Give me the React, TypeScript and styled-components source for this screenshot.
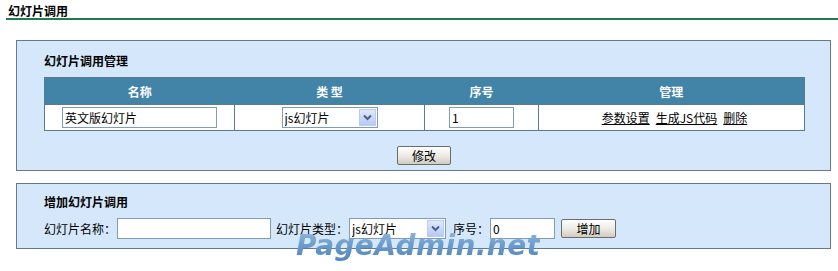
import React from 'react';
import styled, { createGlobalStyle } from 'styled-components';

const GlobalStyle = createGlobalStyle`
  html, body {
    margin: 0;
    padding: 0;
    background: #ffffff;
  }
  body {
    font-family: "Noto Sans CJK SC", "Liberation Sans", sans-serif;
    font-size: 12px;
    color: #000000;
  }
`;

const Page = styled.div`
  position: relative;
  width: 838px;
  height: 271px;
  overflow: hidden;
`;

const TitleBar = styled.div`
  margin-left: 6px;
  padding: 3px 0 0 2px;
  height: 15px;
  line-height: 15px;
  font-weight: bold;
  font-size: 12px;
  border-bottom: 2px solid #237a52;
`;

const Panel = styled.div<{ $top: number }>`
  margin: ${p => p.$top}px 7px 0 16px;
  border: 1px solid #687a87;
  background: #d5e8fb;
  padding: ${p => (p.$top > 15 ? '10px 26px 5px 27px' : '8px 26px 8px 27px')};
`;

const PanelHeading = styled.div<{ $gap: number }>`
  height: 20px;
  line-height: 20px;
  font-weight: bold;
  margin-bottom: ${p => p.$gap}px;
`;

const Grid = styled.table`
  width: 760px;
  border-collapse: collapse;
  border: 1px solid #5b7b91;
  table-layout: fixed;
`;

const HeadCell = styled.th`
  height: 26px;
  padding: 0;
  background: #4283a8;
  color: #ffffff;
  font-weight: bold;
  text-align: center;
  border: 0;
`;

const Cell = styled.td`
  height: 25px;
  padding: 0;
  background: #ffffff;
  text-align: center;
  border-left: 1px solid #5b7b91;
  border-top: 1px solid #5b7b91;
  &:first-child {
    border-left: 0;
  }
`;

const TextBox = styled.input<{ $w: number }>`
  box-sizing: border-box;
  width: ${p => p.$w}px;
  height: 21px;
  margin: 0;
  padding: 0 2px;
  border: 1px solid #7f9db9;
  background: #ffffff;
  font-family: "Noto Sans CJK SC", "Liberation Sans", sans-serif;
  font-size: 12px;
  color: #000000;
  vertical-align: middle;
  outline: none;
`;

const SelectBox = styled.span<{ $w: number }>`
  box-sizing: border-box;
  display: inline-flex;
  align-items: stretch;
  width: ${p => p.$w}px;
  height: 21px;
  border: 1px solid #7f9db9;
  background: #ffffff;
  vertical-align: middle;
`;

const NativeSelect = styled.select`
  flex: 1;
  min-width: 0;
  appearance: none;
  -webkit-appearance: none;
  border: 0;
  margin: 0;
  padding: 0 0 0 2px;
  background: transparent;
  font-family: "Noto Sans CJK SC", "Liberation Sans", sans-serif;
  font-size: 12px;
  color: #000000;
  outline: none;
`;

const DropButton = styled.span`
  box-sizing: border-box;
  width: 17px;
  margin: 1px;
  border: 1px solid #bccbf0;
  background: linear-gradient(#dfe8fd, #b7c9f6);
  display: flex;
  align-items: center;
  justify-content: center;
`;

const Links = styled.span`
  display: inline-flex;
  gap: 6px;
  margin-left: 6px;
  a {
    color: #000000;
    text-decoration: underline;
  }
`;

const Actions = styled.div`
  display: flex;
  justify-content: center;
  margin-top: 15px;
  width: 760px;
`;

const PushButton = styled.button<{ $w: number }>`
  box-sizing: border-box;
  width: ${p => p.$w}px;
  height: 19px;
  margin: 0;
  padding: 0;
  border: 1px solid #6c6c6c;
  border-radius: 2px;
  background: linear-gradient(#ffffff, #ece9e2 55%, #d2ccbf);
  font-family: "Noto Sans CJK SC", "Liberation Sans", sans-serif;
  font-size: 12px;
  line-height: 17px;
  color: #000000;
`;

const FormRow = styled.div`
  display: flex;
  align-items: center;
  height: 23px;
  margin-top: 5px;
`;

const Label = styled.label<{ $ml: number }>`
  margin-left: ${p => p.$ml}px;
  margin-right: 1px;
  white-space: nowrap;
`;

const Spacer = styled.span<{ $w: number }>`
  display: inline-block;
  width: ${p => p.$w}px;
`;

const Watermark = styled.div`
  position: absolute;
  left: 296px;
  top: 229px;
  font-family: "DejaVu Sans", sans-serif;
  font-weight: bold;
  font-style: italic;
  font-size: 28px;
  letter-spacing: 0.4px;
  line-height: 34px;
  background: linear-gradient(#95badf, #6597c9 55%, #4f85bd);
  -webkit-background-clip: text;
  background-clip: text;
  color: transparent;
  pointer-events: none;
`;

const Chevron = () => (
  <svg width="9" height="7" viewBox="0 0 9 7">
    <path d="M1 1.5 L4.5 5 L8 1.5" fill="none" stroke="#4d6185" strokeWidth="2" />
  </svg>
);

const Select: React.FC<{ w: number }> = ({ w }) => (
  <SelectBox $w={w}>
    <NativeSelect defaultValue="js">
      <option value="js">js幻灯片</option>
    </NativeSelect>
    <DropButton>
      <Chevron />
    </DropButton>
  </SelectBox>
);

const App: React.FC = () => (
  <Page>
    <GlobalStyle />
    <TitleBar>幻灯片调用</TitleBar>

    <Panel $top={20}>
      <PanelHeading $gap={6}>幻灯片调用管理</PanelHeading>
      <Grid>
        <colgroup>
          <col style={{ width: 190 }} />
          <col style={{ width: 190 }} />
          <col style={{ width: 114 }} />
          <col style={{ width: 266 }} />
        </colgroup>
        <thead>
          <tr>
            <HeadCell>名称</HeadCell>
            <HeadCell>类&nbsp;型</HeadCell>
            <HeadCell>序号</HeadCell>
            <HeadCell>管理</HeadCell>
          </tr>
        </thead>
        <tbody>
          <tr>
            <Cell>
              <TextBox $w={155} defaultValue="英文版幻灯片" />
            </Cell>
            <Cell>
              <Select w={96} />
            </Cell>
            <Cell>
              <TextBox $w={65} defaultValue="1" />
            </Cell>
            <Cell>
              <Links>
                <a href="#">参数设置</a>
                <a href="#">生成JS代码</a>
                <a href="#">删除</a>
              </Links>
            </Cell>
          </tr>
        </tbody>
      </Grid>
      <Actions>
        <PushButton $w={54}>修改</PushButton>
      </Actions>
    </Panel>

    <Panel $top={12}>
      <PanelHeading $gap={0}>增加幻灯片调用</PanelHeading>
      <FormRow>
        <Label $ml={0}>幻灯片名称：</Label>
        <TextBox $w={154} />
        <Label $ml={5}>幻灯片类型：</Label>
        <Select w={97} />
        <Label $ml={7}>序号：</Label>
        <TextBox $w={65} defaultValue="0" />
        <Spacer $w={6} />
        <PushButton $w={55}>增加</PushButton>
      </FormRow>
    </Panel>

    <Watermark>PageAdmin.net</Watermark>
  </Page>
);

export default App;
